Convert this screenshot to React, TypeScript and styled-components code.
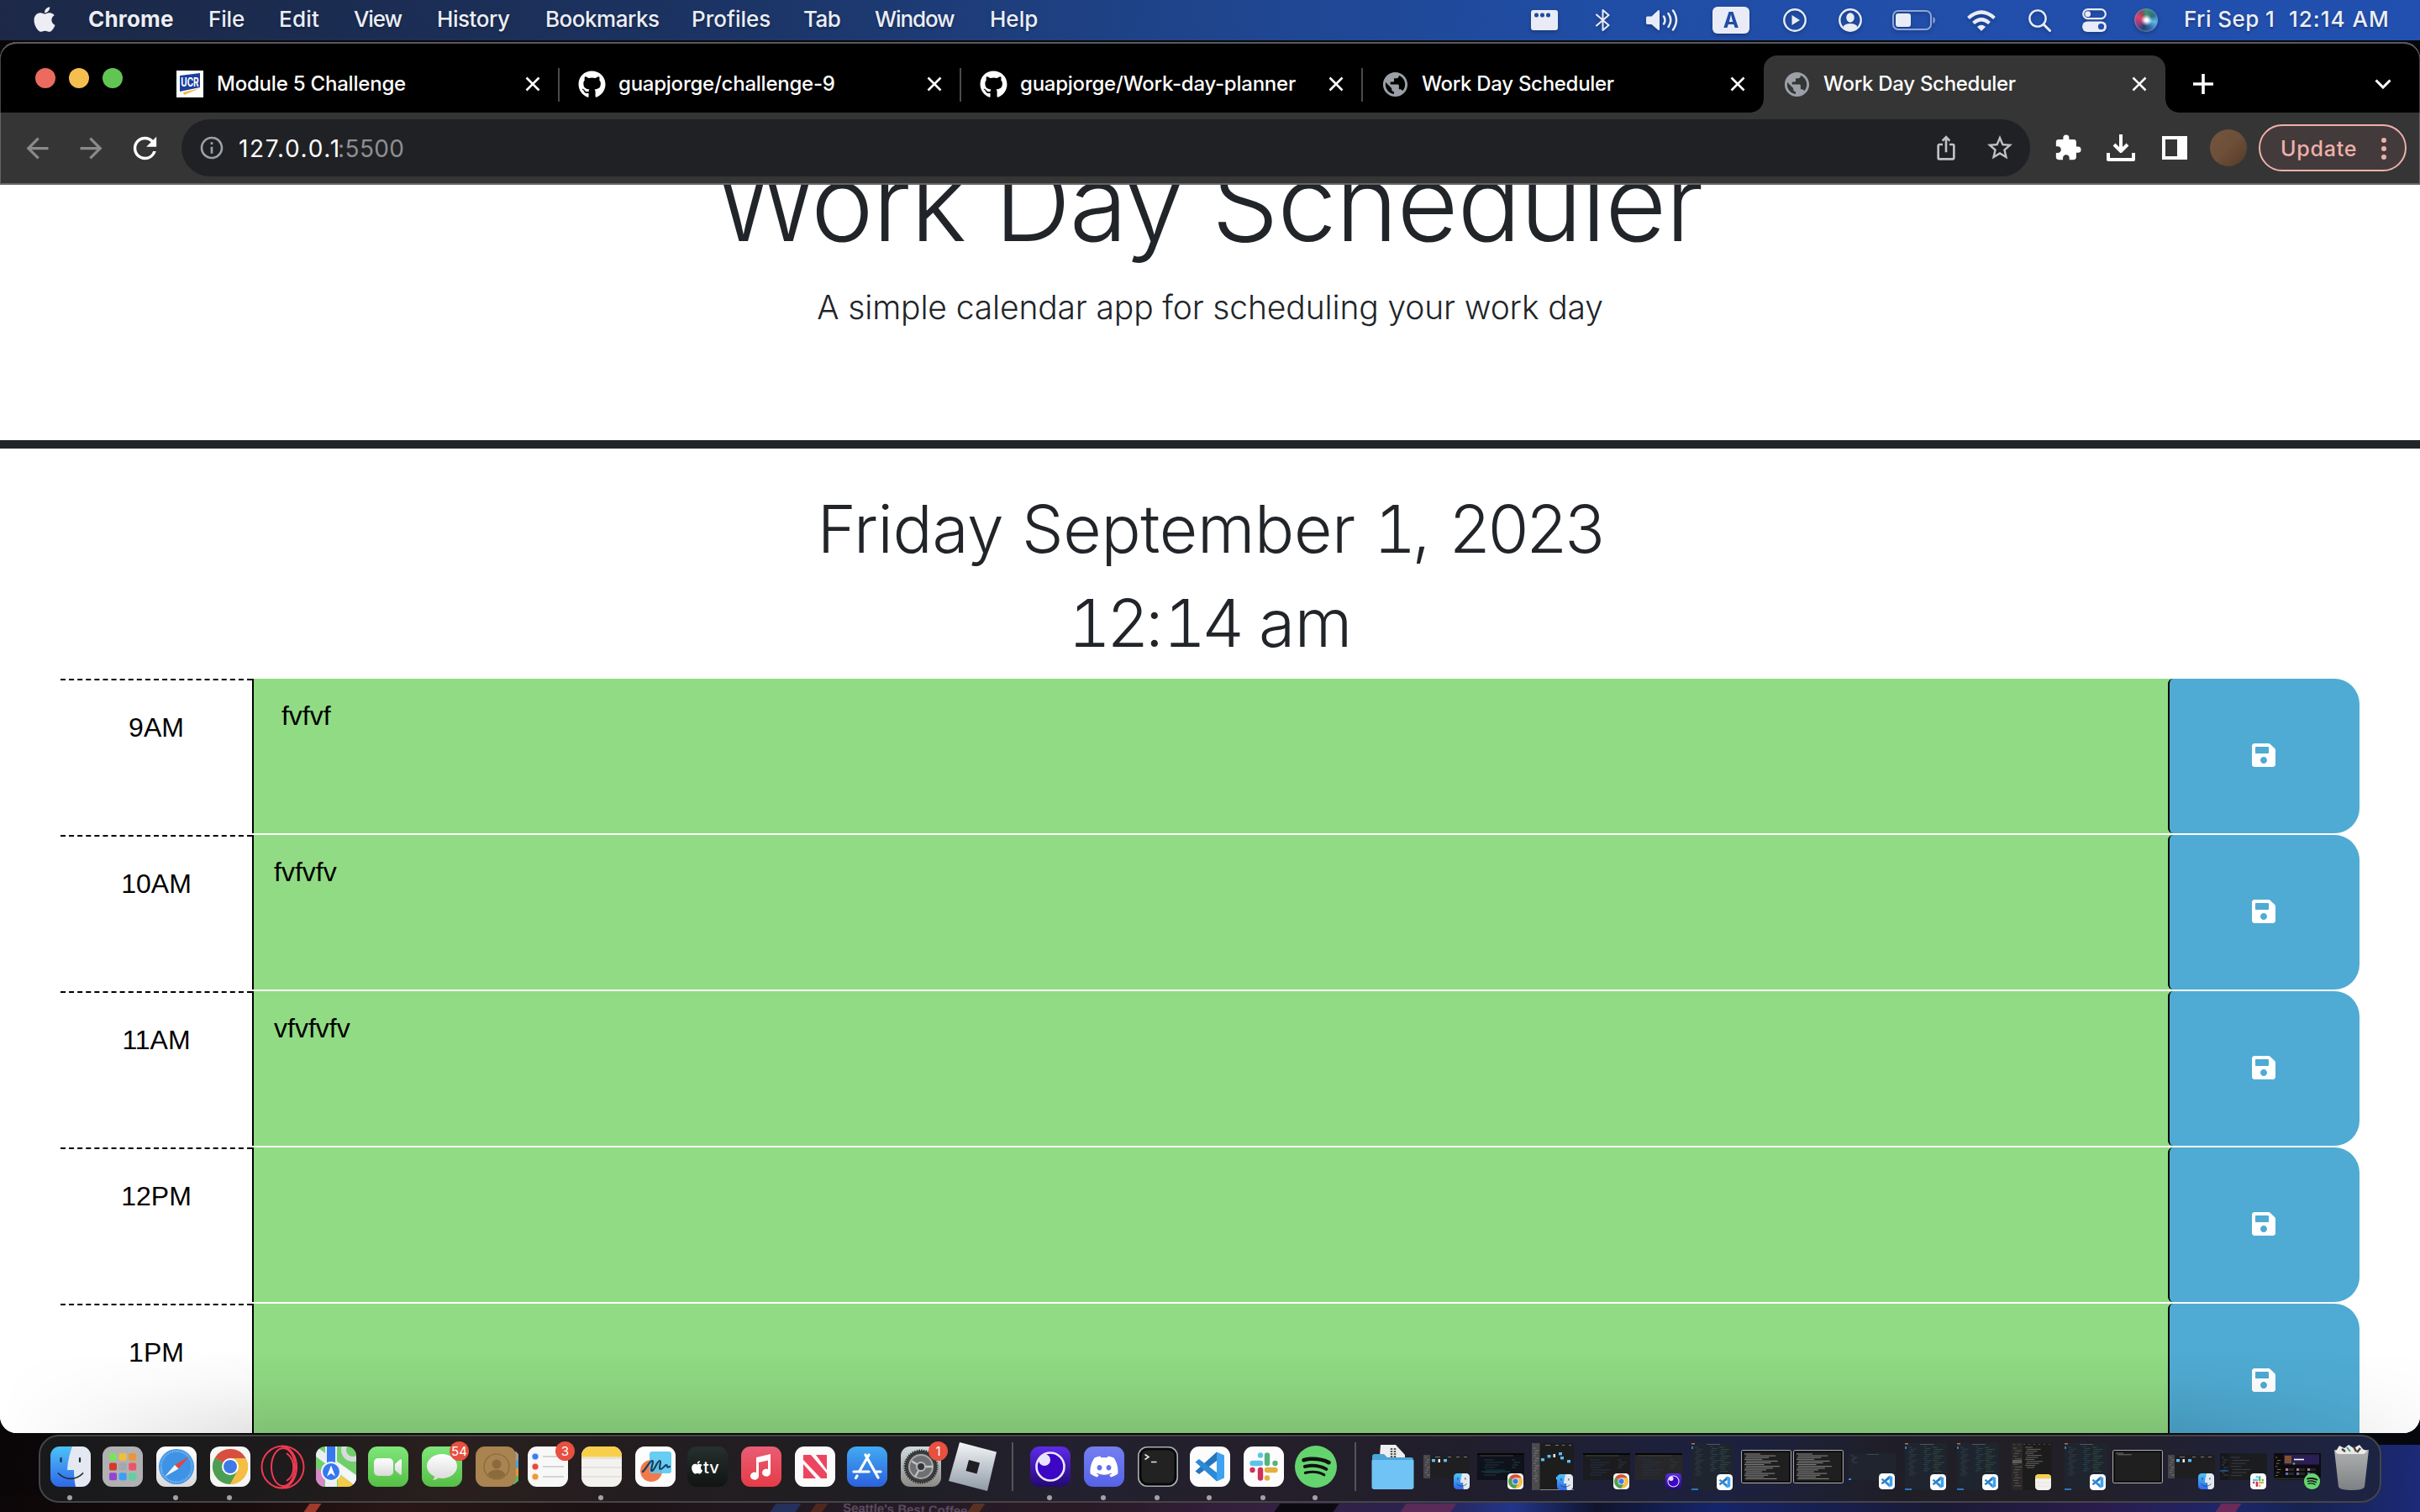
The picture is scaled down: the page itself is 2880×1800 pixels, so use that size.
import React from "react";
import styled, { createGlobalStyle, css } from "styled-components";
import { FaApple, FaGithub, FaDiscord, FaSave, FaSpotify } from "react-icons/fa";
import {
  MdPublic,
  MdIosShare,
  MdStarBorder,
  MdExtension,
  MdArrowBack,
  MdArrowForward,
  MdRefresh,
  MdInfoOutline,
} from "react-icons/md";

const UI = `Inter, "Liberation Sans", sans-serif`;
const HELV = `"Liberation Sans", Arial, sans-serif`;

const Global = createGlobalStyle`
  html, body { margin: 0; padding: 0; background: #000; }
  *, *::before, *::after { box-sizing: border-box; }
  svg { display: block; flex: none; }
`;

/* ---------- desktop ---------- */

const Desktop = styled.div`
  position: relative;
  width: 2880px;
  height: 1800px;
  overflow: hidden;
  display: flex;
  flex-direction: column;
  font-family: ${UI};
  background:
    linear-gradient(90deg, transparent 2640px, #16224f 2740px, #1c2a78 2880px) 0 1720px / 100% 80px no-repeat,
    linear-gradient(90deg, #0c0708 0, #1a0c0d 300px, #2a1616 480px, #1c1214 700px, #241a24 1000px, #2a1a26 1300px,
      #35203f 1500px, #2a2350 1700px, #22358a 1800px, #10142c 1900px, #15256b 2040px, #1a1a34 2300px, #2a1c4c 2500px, #1a2a74 2700px) 0 1780px / 100% 20px no-repeat,
    linear-gradient(90deg, #0a0608 0, #0d0608 100px, #0a0a12 2700px, #06070d 2880px);
`;

const WallpaperStrip = styled.div`
  position: absolute;
  left: 0;
  right: 0;
  bottom: 0;
  height: 10px;
  overflow: hidden;
`;

const Streak = styled.span<{ $x: number; $w: number; $c: string }>`
  position: absolute;
  top: 0;
  height: 10px;
  left: ${(p) => p.$x}px;
  width: ${(p) => p.$w}px;
  background: ${(p) => p.$c};
  transform: skewX(-35deg);
`;

const ShopSign = styled.span`
  position: absolute;
  left: 1003px;
  top: -1px;
  font: 700 15px/15px ${HELV};
  color: #5c4a60;
  white-space: nowrap;
  transform: rotate(1.5deg);
`;

/* ---------- menu bar ---------- */

const MenuBar = styled.header`
  height: 48px;
  flex: none;
  display: flex;
  align-items: center;
  padding: 0 0 3px 37px;
  color: #eceef4;
  background: linear-gradient(90deg, #1c2846 0, #1b2e56 560px, #1c3567 900px, #1f448b 1400px, #204da5 1900px, #2250b0 2880px);
`;

const AppleSlot = styled.div`
  width: 69px;
  margin-left: -1px;
  padding-top: 1px;
`;

const MenuItem = styled.span<{ $w: number; $ls: number; $bold?: boolean; $gap?: number }>`
  width: ${(p) => p.$w}px;
  margin-left: ${(p) => p.$gap ?? 0}px;
  font-size: 26px;
  line-height: 45px;
  font-weight: ${(p) => (p.$bold ? 700 : 500)};
  letter-spacing: ${(p) => p.$ls}px;
  white-space: nowrap;
  text-shadow: 0 2px 3px rgba(0, 0, 0, 0.3);
`;

const Status = styled.div`
  margin-left: auto;
  display: flex;
  align-items: center;
`;

const StatusIcon = styled.span<{ $gap: number }>`
  margin-left: ${(p) => p.$gap}px;
  padding-top: 3px;
  filter: drop-shadow(0 2px 2px rgba(0, 0, 0, 0.25));
`;

const InputSource = styled.span`
  display: flex;
  align-items: center;
  justify-content: center;
  width: 44px;
  height: 32px;
  border-radius: 6px;
  background: #e9ecf6;
  color: #204da5;
  font-size: 25px;
  font-weight: 700;
`;

const Siri = styled.span`
  display: block;
  width: 28px;
  height: 28px;
  border-radius: 50%;
  background:
    radial-gradient(circle at 52% 50%, #ffffff 0 8%, rgba(255, 255, 255, 0.5) 20%, transparent 34%),
    conic-gradient(from 0deg at 50% 50%, #3f8f74, #2d6f80 60deg, #5cb8ee 100deg, #3468a8 150deg, #25406f 200deg, #8a3f80 240deg, #e0406a 290deg, #8d4a5a 330deg, #3f8f74);
  box-shadow: inset 0 0 0 1.5px rgba(110, 150, 190, 0.55);
`;

/* ---------- browser chrome ---------- */

const Window = styled.main`
  position: relative;
  margin-top: 2px;
  height: 1656px;
  flex: none;
  display: flex;
  flex-direction: column;
  overflow: hidden;
  border-radius: 20px;
  background: #fff;
`;

const TabStrip = styled.div`
  height: 84px;
  flex: none;
  display: flex;
  align-items: flex-end;
  background: #000;
  border-radius: 20px 20px 0 0;
  box-shadow: inset 0 2px 0 #585a5b, inset 1px 0 0 #444, inset -1px 0 0 #444;
`;

const Lights = styled.div`
  width: 187px;
  height: 84px;
  padding: 31px 0 0 42px;
  display: flex;
  gap: 16px;
`;

const Light = styled.span<{ $c: string }>`
  width: 24px;
  height: 24px;
  border-radius: 50%;
  background: ${(p) => p.$c};
`;

const Tab = styled.div<{ $active?: boolean; $line?: boolean }>`
  position: relative;
  width: 478px;
  height: 68px;
  padding: 0 22px 0 23px;
  display: flex;
  align-items: center;
  color: #fff;
  ${(p) =>
    p.$line &&
    css`
      &::after {
        content: "";
        position: absolute;
        right: -1px;
        top: 15px;
        width: 2px;
        height: 40px;
        background: #4a4b4c;
      }
    `}
  ${(p) =>
    p.$active &&
    css`
      background: #353535;
      border-radius: 16px 16px 0 0;
      &::before,
      &::after {
        content: "";
        position: absolute;
        bottom: 0;
        width: 16px;
        height: 16px;
      }
      &::before {
        left: -16px;
        background: radial-gradient(circle at 0 0, transparent 15.5px, #353535 16px);
      }
      &::after {
        right: -16px;
        background: radial-gradient(circle at 100% 0, transparent 15.5px, #353535 16px);
      }
    `}
`;

const Favicon = styled.span`
  width: 32px;
  height: 32px;
  display: flex;
  align-items: center;
  justify-content: center;
  color: #9aa0a6;
`;

const TabTitle = styled.span<{ $ls: number }>`
  flex: 1;
  padding: 0 0 1px 16px;
  font-size: 24px;
  line-height: 31px;
  font-weight: 500;
  letter-spacing: ${(p) => p.$ls}px;
  white-space: nowrap;
`;

const StripButton = styled.span<{ $gap?: number; $end?: number }>`
  height: 68px;
  display: flex;
  align-items: center;
  margin-left: ${(p) => (p.$end ? "auto" : `${p.$gap}px`)};
  margin-right: ${(p) => p.$end ?? 0}px;
`;

const Toolbar = styled.div`
  height: 86px;
  flex: none;
  display: flex;
  align-items: center;
  padding: 0 16px 0 24px;
  background: #353535;
  border-bottom: 2px solid #666;
  box-shadow: inset 1px 0 0 #626262, inset -1px 0 0 #626262;
`;

const NavButton = styled.span<{ $on?: boolean }>`
  width: 40px;
  margin-right: 24px;
  display: flex;
  justify-content: center;
  color: ${(p) => (p.$on ? "#fff" : "#8a8a8a")};
`;

const Omnibox = styled.div`
  width: 2200px;
  height: 68px;
  padding: 0 18px 0 20px;
  border-radius: 34px;
  display: flex;
  align-items: center;
  background: #202124;
  color: #9aa0a6;
`;

const Url = styled.span`
  flex: 1;
  margin-left: 16px;
  padding-top: 1px;
  display: flex;
  font-size: 28px;
  line-height: 34px;
`;
const Host = styled.span`
  width: 118px;
  color: #fff;
  letter-spacing: 1.7px;
  white-space: nowrap;
`;
const Port = styled.span`
  color: #8d8f92;
  letter-spacing: 0.4px;
`;

const BoxIcon = styled.span<{ $gap?: number; $c?: string }>`
  margin-left: ${(p) => p.$gap ?? 0}px;
  color: ${(p) => p.$c ?? "#fff"};
`;

const Avatar = styled.span`
  width: 44px;
  height: 44px;
  margin-left: 27px;
  border-radius: 50%;
  background: linear-gradient(135deg, #73553f, #6e4f38 50%, #513a29);
`;

const UpdatePill = styled.span`
  width: 176px;
  height: 56px;
  margin-left: 14px;
  padding: 1px 22px 0 24px;
  border: 2px solid #efb0aa;
  border-radius: 28px;
  background: #433b3b;
  color: #efb0aa;
  display: flex;
  align-items: center;
  justify-content: space-between;
  font-size: 25px;
  font-weight: 500;
  letter-spacing: 0.8px;
`;

/* ---------- planner page ---------- */

const Page = styled.div`
  position: relative;
  flex: 1;
  overflow: hidden;
  background: #fff;
  color: #212529;
  &::after {
    content: "";
    position: absolute;
    left: 0;
    right: 0;
    bottom: 0;
    height: 100px;
    background: linear-gradient(180deg, transparent, rgba(0, 0, 0, 0.03) 40%, rgba(0, 0, 0, 0.115));
    mask-image: linear-gradient(90deg, transparent, #000 320px, #000 2600px, rgba(0, 0, 0, 0.2));
  }
`;

const Jumbotron = styled.header`
  height: 314px;
  border-bottom: 10px solid #212529;
  overflow: hidden;
  text-align: center;
`;

const Title = styled.h1`
  margin: -54px 0 0;
  font-size: 126px;
  line-height: 150px;
  font-weight: 300;
  letter-spacing: -1.2px;
  text-indent: -3px;
  white-space: nowrap;
`;

const Lead = styled.p`
  margin: 20px 0 0;
  font-size: 39px;
  line-height: 60px;
  font-weight: 300;
  letter-spacing: -0.14px;
  white-space: nowrap;
`;

const Now = styled.section`
  padding: 40px 0 10px;
  text-align: center;
`;

const NowLine = styled.p<{ $ls?: number }>`
  margin: 0;
  font-size: 78.5px;
  line-height: 112px;
  font-weight: 300;
  letter-spacing: ${(p) => p.$ls ?? 0}px;
  white-space: nowrap;
`;

const Digits = styled.span`
  font-variant-numeric: tabular-nums;
  letter-spacing: -5px;
`;

const Schedule = styled.div`
  padding: 0 72px;
  font-family: ${HELV};
  font-size: 32px;
  line-height: 48px;
  color: #000;
`;

const TimeBlock = styled.div`
  height: 186px;
  padding-bottom: 2px;
  display: grid;
  grid-template-columns: 228px 2280px 228px;
`;

const Hour = styled.div`
  padding-top: 32px;
  border-top: 2px dashed #000;
  text-align: center;
`;

const Entry = styled.div`
  padding: 20px 24px;
  border-left: 2px solid #000;
  background: #91db84;
  white-space: pre;
`;

const SaveCell = styled.div`
  background: linear-gradient(90deg, #91db84 50%, #fff 50%);
`;

const SaveButton = styled.button`
  width: 100%;
  height: 100%;
  padding: 0 2px 2px 0;
  border: 0;
  border-left: 2px solid #000;
  border-radius: 6px 30px 30px 6px;
  background: #4fabd3;
  color: #fff;
  display: flex;
  align-items: center;
  justify-content: center;
`;

/* ---------- dock ---------- */

const DockBar = styled.footer`
  position: relative;
  width: 2788px;
  height: 81px;
  margin: 2px 0 0 46px;
  padding: 0 12px 5px;
  display: flex;
  align-items: center;
  border: 2px solid #454548;
  border-radius: 24px;
  background: linear-gradient(90deg, #19191b 0, #1d1b1c 280px, #2a1f1e 500px, #231d20 720px, #1f1e23 1000px, #232130 1250px,
    #241f2a 1450px, #211e2c 1700px, #1c2140 2010px, #1f1e28 2200px, #231f26 2400px, #20223a 2640px, #1c2444 2788px);
`;

const DockItem = styled.div<{ $gap: number; $running?: boolean }>`
  position: relative;
  margin-left: ${(p) => p.$gap}px;
  flex: none;
  ${(p) =>
    p.$running &&
    css`
      &::after {
        content: "";
        position: absolute;
        left: calc(50% - 4px);
        top: calc(50% + 34px);
        width: 6px;
        height: 6px;
        border-radius: 50%;
        background: #a2a1a5;
      }
    `}
`;

const Count = styled.span`
  position: absolute;
  left: 33px;
  top: -6px;
  width: 23px;
  height: 23px;
  border-radius: 50%;
  background: #e8503f;
  color: #fff;
  font-size: 15px;
  line-height: 23px;
  text-align: center;
`;

const Divider = styled.span<{ $gap: number }>`
  width: 2px;
  height: 58px;
  margin-left: ${(p) => p.$gap}px;
  background: #56545a;
`;

const Corner = styled.span`
  position: absolute;
  right: 1px;
  bottom: 0;
`;

const Thumb = styled.div<{ $w: number; $h: number; $drop: number }>`
  position: relative;
  width: ${(p) => p.$w}px;
  height: ${(p) => p.$h}px;
  ${Corner} {
    bottom: -${(p) => p.$drop}px;
  }
`;

/* ---------- drawings ---------- */

const Cross = () => (
  <svg width="18" height="18" viewBox="0 0 18 18">
    <path d="M1.5 1.5l15 15M16.5 1.5l-15 15" stroke="#fff" strokeWidth="2.6" />
  </svg>
);

const UcrLogo = () => (
  <svg width="32" height="32" viewBox="0 0 32 32">
    <rect width="32" height="32" fill="#fff" />
    <path d="M4 6l24-3v17L4 25z" fill="#1c3fa0" />
    <path d="M8 26l20-5-19 8z" fill="#f2b53a" />
    <g transform="translate(16 19) scale(.72 1)">
      <text fontSize="14" fontWeight="700" textAnchor="middle" fill="#fff" fontFamily="Inter">
        UCR
      </text>
    </g>
  </svg>
);

const S = ({ s = 48, children }: { s?: number; children: React.ReactNode }) => (
  <svg width={s} height={s} viewBox="0 0 48 48">
    {children}
  </svg>
);

type IconProps = { s?: number };

const Finder = ({ s }: IconProps) => (
  <S s={s}>
    <rect width="48" height="48" rx="11" fill="url(#gFinder)" />
    <path d="M26 0h11a11 11 0 0 1 11 11v26a11 11 0 0 1-11 11h-7c-1.500-7-2-13-2-20h-8C20.500 18 23 8 26 0z" fill="#e4e8f0" />
    <path d="M12.500 14v4M35 14v4" stroke="#1d2b3a" strokeWidth="2.200" strokeLinecap="round" />
    <path d="M9.500 32c8 8.500 21 8.500 29 0" fill="none" stroke="#1d2b3a" strokeWidth="1.800" strokeLinecap="round" />
  </S>
);

const tileColors = ["#7be35a", "#f2bd3c", "#e8963a", "#d33b2c", "#a3a8ac", "#ee5468", "#9344d3", "#3aa0f5", "#62cfa0"];
const Launchpad = () => (
  <S>
    <rect width="48" height="48" rx="11" fill="#b1b1b3" />
    {tileColors.map((c, i) => (
      <rect key={i} x={8 + (i % 3) * 11.6} y={8 + Math.floor(i / 3) * 11.6} width="9" height="9" rx="2" fill={c} />
    ))}
  </S>
);

const Safari = () => (
  <S>
    <rect width="48" height="48" rx="11" fill="url(#gWhite)" />
    <circle cx="24" cy="24" r="21" fill="#3f93e6" />
    <circle cx="24" cy="24" r="18.500" fill="none" stroke="#a9d3f7" strokeWidth="2.400" strokeDasharray="0.600 1.300" />
    <path d="M39 12L26.500 26.500 22 22z" fill="#e2453b" />
    <path d="M10 36l12-14 4.500 4.500z" fill="#f3f5f7" />
  </S>
);

const ChromeLogo = ({ s }: IconProps) => (
  <S s={s}>
    <rect width="48" height="48" rx="11" fill="#f6f6f6" />
    <circle cx="24" cy="24" r="21" fill="#f3be42" />
    <path d="M24 24L5.810 13.500A21 21 0 0 1 42.500 14H24z" fill="#d64f41" />
    <path d="M24 24l9 4.500L24 45A21 21 0 0 1 5.810 13.500z" fill="#4c9e54" />
    <path d="M24 14h18.500A21 21 0 0 1 24 45l8.700-16z" fill="#f3be42" />
    <circle cx="24" cy="24" r="10" fill="#fff" />
    <circle cx="24" cy="24" r="8" fill="#3f79e6" />
  </S>
);

const Opera = () => (
  <svg width="53" height="53" viewBox="0 0 53 53">
    <g fill="none" stroke="#ee3a52" strokeWidth="2">
      <circle cx="26.500" cy="26.500" r="25" />
      <ellipse cx="27" cy="26.500" rx="14" ry="22.500" />
      <path d="M25 1.500c24 3 24 47 0 50" />
      <path d="M31 10c11 8 11 26 0 33" />
    </g>
  </svg>
);

const Maps = () => (
  <S>
    <g clipPath="url(#cApp)">
      <rect width="48" height="48" fill="#6fd06a" />
      <path d="M0 12l48 36V34L0 0z" fill="#eceef0" />
      <path d="M0 26l10 4v18H0z" fill="#d987c6" />
      <path d="M48 48H26V32z" fill="#f6cb45" />
      <circle cx="44" cy="4" r="11" fill="none" stroke="#d8dadd" strokeWidth="6" />
      <path d="M11 0h14v48H11z" fill="#eceef0" />
      <path d="M13 0h10v24H13z" fill="#3578f0" />
      <path d="M26 28l22 20V36L28 20z" fill="#f5f6f7" />
    </g>
    <circle cx="18" cy="30" r="12" fill="#f3f4f6" />
    <circle cx="18" cy="30" r="10" fill="#3578f0" />
    <path d="M18 22.500l5 13-5-3.500-5 3.500z" fill="#fff" />
  </S>
);

const FaceTime = () => (
  <S>
    <rect width="48" height="48" rx="11" fill="url(#gGreen)" />
    <rect x="7" y="14" width="23" height="21" rx="5" fill="url(#gWhite)" />
    <path d="M32 21l6-5.500q2-1 2 1v16q0 2-2 1L32 28z" fill="url(#gWhite)" />
  </S>
);

const Messages = () => (
  <S>
    <rect width="48" height="48" rx="11" fill="url(#gGreen)" />
    <path d="M24 9c10 0 18 6.500 18 14.500S34 38 24 38c-1.500 0-3-.2-4.500-.4C18 39 15.500 40 13 40c1.200-1.200 2-3 2-4.500C9.500 33 6 28.500 6 23.500 6 15.500 14 9 24 9z" fill="url(#gWhite)" />
  </S>
);

const Contacts = () => (
  <svg width="51" height="48" viewBox="0 0 51 48">
    <path d="M40 6h8l3 3v8H40z" fill="#9b9b9b" />
    <path d="M40 17h11v9H40z" fill="#4aa3dc" />
    <path d="M40 26h11v9H40z" fill="#ef9234" />
    <path d="M40 35h11v6l-5 4h-6z" fill="#57b85c" />
    <rect width="48" height="48" rx="11" fill="#a98450" />
    <circle cx="25" cy="24" r="15" fill="none" stroke="#86673b" strokeWidth="1.200" />
    <circle cx="25" cy="21" r="5.500" fill="#8b6b3e" />
    <path d="M14.500 33c4-7 17-7 21 0-5 7-16 7-21 0z" fill="#8b6b3e" />
  </svg>
);

const Reminders = () => (
  <S>
    <rect width="48" height="48" rx="11" fill="#f8f8f8" />
    {["#3c7cf0", "#e8473c", "#ec9a36"].map((c, i) => (
      <g key={c}>
        <circle cx="9" cy={12 + i * 12} r="3.300" fill={c} stroke={c} strokeOpacity=".35" strokeWidth="1.800" />
        <path d={`M18 ${12 + i * 12}h25`} stroke="#c9c9c9" strokeWidth="1.500" />
      </g>
    ))}
  </S>
);

const Notes = ({ s }: IconProps) => (
  <S s={s}>
    <g clipPath="url(#cApp)">
      <rect width="48" height="48" fill="#f3f2ee" />
      <rect width="48" height="12.500" fill="#f8cf4b" />
      <path d="M0 14h48" stroke="#b9b6ac" strokeDasharray="1 1" />
      <path d="M0 25h48M0 36h48" stroke="#d4d3cf" />
    </g>
  </S>
);

const Freeform = () => (
  <S>
    <rect width="48" height="48" rx="11" fill="#fdfdfd" />
    <circle cx="19" cy="29" r="13" fill="#f07a4c" />
    <rect x="17" y="6" width="26" height="26" rx="3" fill="#56c8f2" fillOpacity=".9" />
    <path d="M9 30c4-3 8-13 11-13s-3 12 0 12 6-12 9-12-2 10 1 10 5-5 7-5-1 4 4 2" fill="none" stroke="#173c5f" strokeWidth="2.200" strokeLinecap="round" />
  </S>
);

const AppleTv = () => (
  <S>
    <rect width="48" height="48" rx="11" fill="url(#gTv)" />
    <g transform="translate(5 16) scale(.0345)" fill="#fff">
      <path d="M318.700 268.700c-.2-36.700 16.400-64.400 50-84.800-18.800-26.900-47.200-41.700-84.700-44.600-35.500-2.800-74.300 20.700-88.500 20.700-15 0-49.400-19.700-76.400-19.700C63.300 141.200 4 184.800 4 273.500q0 39.300 14.400 81.200c12.800 36.700 59 126.700 107.200 125.200 25.200-.6 43-17.900 75.800-17.900 31.800 0 48.300 17.900 76.400 17.900 48.600-.7 90.400-82.500 102.600-119.300-65.200-30.700-61.700-90-61.700-91.900zM262.100 104.500c27.300-32.400 24.800-61.900 24-72.500-24.100 1.400-52 16.400-67.900 34.900-17.500 19.800-27.800 44.300-25.600 71.900 26.100 2 49.900-11.400 69.500-34.300z" />
    </g>
    <text x="19" y="32" fontSize="20" fontWeight="500" fill="#fff" fontFamily="Inter">tv</text>
  </S>
);

const Music = () => (
  <S>
    <rect width="48" height="48" rx="11" fill="url(#gMusic)" />
    <path d="M18 13l17-4v22a5 4.500 0 1 1-3-4V16.500l-11 2.600V35a5 4.500 0 1 1-3-4z" fill="#fff" />
  </S>
);

const News = () => (
  <S>
    <rect width="48" height="48" rx="11" fill="#fbfbfb" />
    <rect x="10" y="10" width="28" height="28" fill="#ec4560" />
    <path d="M21 10h-2l19 22v-4L25 10z" fill="#fbfbfb" />
    <path d="M10 16v5l15 17h6z" fill="#fbfbfb" />
  </S>
);

const AppStore = () => (
  <S>
    <rect width="48" height="48" rx="11" fill="url(#gBlue)" />
    <g stroke="#fff" strokeWidth="3.200" strokeLinecap="round">
      <path d="M26 10L14.500 30M22 10l15 27M8 30h18M33 30h7M12 35l-1.500 2.500" />
    </g>
  </S>
);

const Settings = () => (
  <S>
    <rect width="48" height="48" rx="11" fill="url(#gGray)" />
    <circle cx="24" cy="24" r="19" fill="#3c3d3f" stroke="#2a2b2c" strokeWidth="3" strokeDasharray="1.500 1.200" />
    <circle cx="24" cy="24" r="14" fill="#6e7073" stroke="#a7a9ab" strokeWidth="2" />
    <path d="M24 24L13 17.500M24 24h14M24 24l-7 12" stroke="#c2c4c5" strokeWidth="2.400" />
    <circle cx="24" cy="24" r="5" fill="#333" stroke="#b4b6b8" strokeWidth="2" />
  </S>
);

const Roblox = () => (
  <svg width="58" height="58" viewBox="0 0 58 58">
    <path d="M13 0l44 11.500L46 58 0 46z" fill="url(#gRoblox)" />
    <path d="M24 21l13 3.500-3.500 13L20.500 34z" fill="#1f1e23" />
  </svg>
);

const Orb = ({ s }: IconProps) => (
  <S s={s}>
    <rect width="48" height="48" rx="11" fill="url(#gOrb)" />
    <circle cx="24" cy="24" r="16.500" fill="#3d06c4" stroke="#ece8ff" strokeWidth="2.600" />
    <circle cx="17" cy="16" r="7" fill="#e9e4fb" />
  </S>
);

const TileBase = styled.span<{ $bg: string }>`
  width: 48px;
  height: 48px;
  border-radius: 11px;
  background: ${(p) => p.$bg};
  color: #fff;
  display: flex;
  align-items: center;
  justify-content: center;
`;

const Discord = () => (
  <TileBase $bg="linear-gradient(#747fee, #5663e8)">
    <FaDiscord size={36} />
  </TileBase>
);

const Terminal = () => (
  <S>
    <rect x=".8" y=".8" width="46.400" height="46.400" rx="10.500" fill="#070707" stroke="#a9b0b3" strokeWidth="1.600" />
    <rect x="4.500" y="4.500" width="39" height="39" rx="7" fill="#222" />
    <path d="M8.500 9.500l4.500 3-4.500 3M16 18.500h6.500" fill="none" stroke="#e6e6e6" strokeWidth="1.600" />
  </S>
);

const VsCode = ({ s }: IconProps) => (
  <S s={s}>
    <rect width="48" height="48" rx="11" fill="#fcfcfc" />
    <path d="M6.500 29.500L32 6.500v10.500L11 33z" fill="#2676bd" />
    <path d="M6.500 18.500L11 15l21 16v10.500z" fill="#2b8ad6" />
    <path d="M32 6.500l9 4v27l-9 4z" fill="#3ea2f0" />
  </S>
);

const Slack = ({ s }: IconProps) => (
  <S s={s}>
    <rect width="48" height="48" rx="11" fill="#fcfcfc" />
    <g strokeWidth="6.400" strokeLinecap="round">
      <path d="M20 10.500v.01" stroke="#5cc4ec" />
      <path d="M10.500 20h9.500" stroke="#5cc4ec" />
      <path d="M28 10.500V20" stroke="#55b37f" />
      <path d="M37.500 20v.01" stroke="#55b37f" />
      <path d="M28 28h9.500" stroke="#e2b041" />
      <path d="M28 37.500v.01" stroke="#e2b041" />
      <path d="M20 28v9.500" stroke="#cf3058" />
      <path d="M10.500 28v.01" stroke="#cf3058" />
    </g>
  </S>
);

const SpotifyDisc = styled.span<{ $s: number }>`
  display: block;
  width: ${(p) => p.$s}px;
  height: ${(p) => p.$s}px;
  border-radius: 50%;
  background: radial-gradient(#111 60%, #65d46e 62%);
  color: #65d46e;
`;
const Spotify = ({ s = 50 }: IconProps) => (
  <SpotifyDisc $s={s}>
    <FaSpotify size={s} />
  </SpotifyDisc>
);

const Folder = () => (
  <svg width="51" height="53" viewBox="0 0 51 53">
    <path d="M11 0h18l11 12v14H9z" fill="#eee" />
    <path d="M24 4v14M28 4v14" stroke="#555" strokeWidth="2.500" strokeDasharray="2 1" />
    <path d="M1 14q0-3 3-3h11l4 4h28q3 0 3 3v8H1z" fill="#4ba4d6" />
    <path d="M.5 19q0-1 1-1h48q1 0 1 1v31q0 3-3 3h-44q-3 0-3-3z" fill="#70c3f5" />
  </svg>
);

const Trash = () => (
  <svg width="43" height="55" viewBox="0 0 43 55">
    <path d="M1 7h41l-5 44q-1 4-15.500 4T6 51z" fill="url(#gTrash)" />
    <path d="M2 10l5-8 6 3 5-4 6 4 7-4 4 5 5 3-4 3H6z" fill="#eceae8" />
    <path d="M10 6l4 3M24 3l3 6M32 5l-4 5" stroke="#4a4038" strokeWidth="2.400" />
    <path d="M16 4l4 5" stroke="#38a08c" strokeWidth="2" />
  </svg>
);

const GradientDefs = styled.svg`
  position: absolute;
`;

const Gradients = () => (
  <GradientDefs width="0" height="0">
    <defs>
      {(
        [
          ["gFinder", "#4cc3f8", "#2f66ea"],
          ["gWhite", "#ffffff", "#dadada"],
          ["gGreen", "#7fe67a", "#55bf45"],
          ["gTv", "#26302e", "#101413"],
          ["gMusic", "#ea5d74", "#e63b46"],
          ["gBlue", "#42aaf2", "#2b62de"],
          ["gGray", "#cfdadd", "#8b8984"],
          ["gRoblox", "#f4f6f8", "#8f9aa6"],
          ["gOrb", "#5d2be8", "#250873"],
          ["gTrash", "#aeb0b1", "#7e8183"],
        ] as const
      ).map(([id, a, b]) => (
        <linearGradient key={id} id={id} x1="0" y1="0" x2="0" y2="1">
          <stop offset="0" stopColor={a} />
          <stop offset="1" stopColor={b} />
        </linearGradient>
      ))}
      <clipPath id="cApp">
        <rect width="48" height="48" rx="11" />
      </clipPath>
    </defs>
  </GradientDefs>
);

/* miniature window contents */

const textRows = (n: number, x: number, y: number, step: number, c: string, max: number) =>
  Array.from({ length: n }, (_, i) => (
    <path key={`${x}-${i}`} d={`M${x + ((i * 5) % 3)} ${y + i * step}h${max * (0.45 + ((i * 37) % 10) / 18)}`} stroke={c} strokeWidth="1" />
  ));

const MiniFinder = ({ tall }: { tall?: boolean }) =>
  tall ? (
    <svg width="50" height="56" viewBox="0 0 50 56">
      <rect width="50" height="56" fill="#1d1d1e" />
      <rect width="9.500" height="56" fill="#4b4b4e" />
      {textRows(14, 2, 6, 3, "#7d7d82", 5)}
      <path d="M16 2.500h6M28 2.500h4M36 2.500h3M44 2.500h3" stroke="#77777c" />
      {[[11, 18], [18.500, 14], [32, 11], [34, 16], [42, 20], [29, 40]].map(([x, y]) => (
        <rect key={x} x={x} y={y} width="4" height="3.400" fill="#5fbcf3" />
      ))}
      <rect x="25.500" y="13" width="2.500" height="4" fill="#eee" />
      <path d="M10 55.500h40" stroke="#8a8a8c" />
    </svg>
  ) : (
    <svg width="56" height="28" viewBox="0 0 56 28">
      <rect width="56" height="28" fill="#1f1f21" />
      <rect width="8" height="28" fill="#46464a" />
      {textRows(8, 2, 3, 3, "#77777c", 4)}
      <path d="M14 2.500h6M29 2.500h4M39 2.500h4M48 2.500h4" stroke="#77777c" />
      <rect x="10" y="5" width="4" height="3.400" fill="#5fbcf3" />
      <rect x="17.500" y="5" width="2.500" height="4" fill="#eee" />
      <rect x="24" y="5" width="4" height="3.400" fill="#5fbcf3" />
    </svg>
  );

const MiniBrowser = ({ tint = "#0d121b" }: { tint?: string }) => (
  <svg width="56" height="32" viewBox="0 0 56 32">
    <rect width="56" height="32" fill={tint} />
    <path d="M0 1h56" stroke="#050505" strokeWidth="2" />
    <path d="M3 3h40" stroke="#3c4234" />
    {textRows(7, 8, 8, 3, "#263244", 26)}
    {textRows(4, 41, 8, 3, "#2c3a40", 10)}
    {tint === "#0d121b" && <path d="M5 22h34" stroke="#14514e" />}
  </svg>
);

const MiniCode = ({ wide }: { wide?: boolean }) =>
  wide ? (
    <svg width="56" height="32" viewBox="0 0 56 32">
      <rect width="56" height="32" fill="#20242e" />
      {textRows(5, 3, 3, 2, "#374252", 6)}
      <path d="M22 1.500h14" stroke="#3d4654" />
      <rect y="30" width="3" height="2" fill="#2d8ae0" />
    </svg>
  ) : (
    <svg width="50" height="56" viewBox="0 0 50 56">
      <rect width="50" height="56" fill="#1f252e" />
      <path d="M18 1.500h16" stroke="#4c5665" />
      {textRows(16, 4, 5, 2.2, "#303b48", 9)}
      {textRows(13, 22, 4, 2.4, "#29454e", 8)}
      {textRows(12, 33, 5, 2.6, "#324a42", 12)}
      <rect y="0" width="4" height="1.500" fill="#b8734a" />
      <rect y="4" width="2" height="3" fill="#2d7fc4" />
      <path d="M0 55h8" stroke="#2f8de0" strokeWidth="1.600" />
    </svg>
  );

const MiniTerminal = ({ full }: { full?: boolean }) => (
  <svg width="60" height="40" viewBox="0 0 60 40">
    <rect x=".8" y=".8" width="58.400" height="38.400" rx="2" fill="#1f1f1f" stroke="#a8a9ab" strokeWidth="1.500" />
    <rect x="2" y="2" width="56" height="36" fill="none" stroke="#050505" strokeWidth="1.500" />
    {full ? textRows(15, 4, 5, 2.1, "#8b8b8b", 42) : textRows(2, 4, 4, 1.8, "#707070", 20)}
  </svg>
);

const MiniNotes = () => (
  <svg width="48" height="56" viewBox="0 0 48 56">
    <rect width="48" height="56" fill="#1d1c1c" />
    <rect width="13" height="56" fill="#2b2828" />
    <path d="M2 1.500h44" stroke="#594a22" strokeDasharray="2 4" />
    {textRows(15, 2, 6, 3.2, "#5a5656", 9)}
    <rect x="1" y="20" width="11" height="4" fill="#605c5c" />
    {textRows(11, 16, 5, 2.4, "#666261", 20)}
  </svg>
);

const MiniSlack = () => (
  <svg width="56" height="32" viewBox="0 0 56 32">
    <rect width="56" height="32" fill="#1b1c1f" />
    <rect width="10" height="32" fill="#15171b" />
    {textRows(8, 2, 5, 3, "#40434a", 6)}
    {textRows(7, 13, 5, 3.600, "#3d3e42", 24)}
    <path d="M0 21h10" stroke="#1d5fae" strokeWidth="1.400" />
  </svg>
);

const MiniSpotify = () => (
  <svg width="56" height="32" viewBox="0 0 56 32">
    <rect width="56" height="32" fill="#0c0c0e" />
    <rect x="12" y="1.500" width="42" height="12" fill="#2b1d55" />
    <rect x="13" y="3" width="8" height="9" fill="#80502f" />
    <path d="M24 7.500h12" stroke="#fff" strokeWidth="1.600" />
    <circle cx="24" cy="12.500" r="1.300" fill="#4cc15d" />
    {[14, 27, 40].map((x) => (
      <g key={x}>
        <rect x={x} y="18" width="10" height="3" fill="#25252a" />
        <rect x={x} y="23" width="10" height="3" fill="#25252a" />
        <rect x={x} y="18" width="3" height="3" fill="#b07fa0" />
        <rect x={x} y="23" width="3" height="3" fill="#5d6fae" />
      </g>
    ))}
    {textRows(7, 2, 5, 3.600, "#8a6a5a", 5)}
    <path d="M0 30.500h56" stroke="#333" strokeWidth="1.500" />
  </svg>
);

/* ---------- data ---------- */

const menus: { label: string; w: number; ls: number; bold?: boolean }[] = [
  { label: "Chrome", w: 143, ls: 0.19, bold: true },
  { label: "File", w: 84, ls: -0.14 },
  { label: "Edit", w: 89, ls: 0.23 },
  { label: "View", w: 99, ls: -1.1 },
  { label: "History", w: 129, ls: -0.45 },
  { label: "Bookmarks", w: 174, ls: -0.48 },
  { label: "Profiles", w: 133, ls: 0 },
  { label: "Tab", w: 85, ls: -0.6 },
  { label: "Window", w: 137, ls: -1.1 },
  { label: "Help", w: 80, ls: 0 },
];

const tabs = [
  { title: "Module 5 Challenge", icon: <UcrLogo />, ls: -0.21, line: true },
  { title: "guapjorge/challenge-9", icon: <FaGithub size={33} color="#fff" />, ls: -0.24, line: true },
  { title: "guapjorge/Work-day-planner", icon: <FaGithub size={33} color="#fff" />, ls: -0.24, line: true },
  { title: "Work Day Scheduler", icon: <MdPublic size={35} />, ls: -0.3 },
  { title: "Work Day Scheduler", icon: <MdPublic size={35} />, ls: -0.3, active: true },
];

const hours = [
  { hour: "9AM", text: " fvfvf" },
  { hour: "10AM", text: "fvfvfv" },
  { hour: "11AM", text: "vfvfvfv" },
  { hour: "12PM", text: "" },
  { hour: "1PM", text: "" },
];

const apps: { el: React.ReactNode; gap: number; running?: boolean; count?: string }[] = [
  { el: <Finder />, gap: 0, running: true },
  { el: <Launchpad />, gap: 14 },
  { el: <Safari />, gap: 16, running: true },
  { el: <ChromeLogo />, gap: 16, running: true },
  { el: <Opera />, gap: 12 },
  { el: <Maps />, gap: 13 },
  { el: <FaceTime />, gap: 14 },
  { el: <Messages />, gap: 16, count: "54" },
  { el: <Contacts />, gap: 16 },
  { el: <Reminders />, gap: 11, count: "3" },
  { el: <Notes />, gap: 16, running: true },
  { el: <Freeform />, gap: 16 },
  { el: <AppleTv />, gap: 14 },
  { el: <Music />, gap: 16 },
  { el: <News />, gap: 16 },
  { el: <AppStore />, gap: 14 },
  { el: <Settings />, gap: 16, count: "1" },
  { el: <Roblox />, gap: 9 },
];

const recents: { el: React.ReactNode; gap: number }[] = [
  { el: <Orb />, gap: 20 },
  { el: <Discord />, gap: 16 },
  { el: <Terminal />, gap: 16 },
  { el: <VsCode />, gap: 14 },
  { el: <Slack />, gap: 16 },
  { el: <Spotify />, gap: 13 },
];

const windows: { el: React.ReactNode; w: number; h: number; gap: number; drop?: number; corner?: React.ReactNode }[] = [
  { el: <MiniFinder />, w: 56, h: 28, gap: 11, drop: 13, corner: <Finder s={19} /> },
  { el: <MiniBrowser />, w: 56, h: 32, gap: 8, drop: 11, corner: <ChromeLogo s={19} /> },
  { el: <MiniFinder tall />, w: 50, h: 56, gap: 9, drop: -1, corner: <Finder s={19} /> },
  { el: <MiniBrowser tint="#1b1b20" />, w: 56, h: 32, gap: 11, drop: 11, corner: <ChromeLogo s={19} /> },
  { el: <MiniBrowser tint="#272729" />, w: 56, h: 32, gap: 6, drop: 11, corner: <Orb s={19} /> },
  { el: <MiniCode />, w: 50, h: 56, gap: 11, drop: -1, corner: <VsCode s={19} /> },
  { el: <MiniTerminal full />, w: 60, h: 40, gap: 9 },
  { el: <MiniTerminal full />, w: 60, h: 40, gap: 2 },
  { el: <MiniCode wide />, w: 56, h: 32, gap: 6, drop: 11, corner: <VsCode s={19} /> },
  { el: <MiniCode />, w: 50, h: 56, gap: 11, drop: -1, corner: <VsCode s={19} /> },
  { el: <MiniCode />, w: 50, h: 56, gap: 12, drop: -1, corner: <VsCode s={19} /> },
  { el: <MiniNotes />, w: 48, h: 56, gap: 15, drop: -1, corner: <Notes s={19} /> },
  { el: <MiniCode />, w: 50, h: 56, gap: 15, drop: -1, corner: <VsCode s={19} /> },
  { el: <MiniTerminal />, w: 60, h: 40, gap: 7 },
  { el: <MiniFinder />, w: 56, h: 28, gap: 6, drop: 13, corner: <Finder s={19} /> },
  { el: <MiniSlack />, w: 56, h: 32, gap: 6, drop: 11, corner: <Slack s={19} /> },
  { el: <MiniSpotify />, w: 56, h: 32, gap: 8, drop: 11, corner: <Spotify s={19} /> },
];

const W = "#e9ecf6";

const StatusIcons = () => (
  <>
    <StatusIcon $gap={0}>
      <svg width="32" height="24" viewBox="0 0 32 24">
        <rect width="32" height="24" rx="3" fill={W} />
        <g fill="#204a9c">
          <rect x="4" y="3.500" width="5" height="5" rx="2" />
          <rect x="11" y="3.500" width="5" height="5" rx="2" />
          <rect x="18" y="3.500" width="5" height="5" rx="2" />
        </g>
      </svg>
    </StatusIcon>
    <StatusIcon $gap={45}>
      <svg width="17" height="28" viewBox="0 0 17 28">
        <path d="M1 7.500l14.500 12.500-7 6V2l7 6L1 20.500" fill="none" stroke={W} strokeWidth="2" strokeLinejoin="round" strokeLinecap="round" />
      </svg>
    </StatusIcon>
    <StatusIcon $gap={43}>
      <svg width="39" height="28" viewBox="0 0 39 28">
        <path d="M0 11q0-1.500 1.500-1.500h5L14 2.500q2-1.500 2 1v21q0 2.500-2 1L6.500 19h-5Q0 19 0 17z" fill={W} />
        <path d="M21 9.500q3 4.500 0 9M26.500 6q5.500 8 0 16M32 2.500q8 11.500 0 23" fill="none" stroke={W} strokeWidth="2.500" strokeLinecap="round" />
      </svg>
    </StatusIcon>
    <StatusIcon $gap={40}>
      <InputSource>A</InputSource>
    </StatusIcon>
    <StatusIcon $gap={40}>
      <svg width="28" height="28" viewBox="0 0 28 28">
        <circle cx="14" cy="14" r="12.700" fill="none" stroke={W} strokeWidth="2.400" />
        <path d="M10.500 8v12l9.500-6z" fill={W} />
      </svg>
    </StatusIcon>
    <StatusIcon $gap={38}>
      <svg width="28" height="28" viewBox="0 0 28 28">
        <circle cx="14" cy="14" r="12.700" fill="none" stroke={W} strokeWidth="2.400" />
        <ellipse cx="14" cy="11" rx="4.800" ry="5.800" fill={W} />
        <path d="M5.500 22q2-4 8.500-4t8.500 4q-3.500 4.500-8.500 4.500T5.500 22z" fill={W} />
      </svg>
    </StatusIcon>
    <StatusIcon $gap={36}>
      <svg width="51" height="24" viewBox="0 0 51 24">
        <rect x="1" y="1" width="45" height="22" rx="6" fill="none" stroke="#8fa6d8" strokeWidth="2" />
        <rect x="4" y="4" width="18" height="16" rx="3" fill={W} />
        <path d="M48.500 8q2.500 1 2.500 4t-2.500 4z" fill="#8fa6d8" />
      </svg>
    </StatusIcon>
    <StatusIcon $gap={38}>
      <svg width="34" height="25" viewBox="0 0 34 25">
        <g fill="none" stroke={W} strokeWidth="4.200">
          <path d="M1.500 9.500q15.500-14 31 0" />
          <path d="M7.500 15.500q9.500-8.500 19 0" />
        </g>
        <path d="M12 20q5-4.500 10 0l-5 5z" fill={W} />
      </svg>
    </StatusIcon>
    <StatusIcon $gap={39}>
      <svg width="27" height="27" viewBox="0 0 27 27">
        <circle cx="11" cy="11" r="9.600" fill="none" stroke={W} strokeWidth="2.400" />
        <path d="M18 18l7.500 7.500" stroke={W} strokeWidth="3" strokeLinecap="round" />
      </svg>
    </StatusIcon>
    <StatusIcon $gap={37}>
      <svg width="29" height="28" viewBox="0 0 29 28">
        <rect x="1.200" y="1.200" width="26.600" height="11" rx="5.500" fill="none" stroke={W} strokeWidth="2.200" />
        <circle cx="6.700" cy="6.700" r="3.400" fill={W} />
        <rect y="15.500" width="29" height="12.500" rx="6.200" fill={W} />
        <circle cx="22.500" cy="21.700" r="3.600" fill="#2250b0" />
      </svg>
    </StatusIcon>
    <StatusIcon $gap={33}>
      <Siri />
    </StatusIcon>
  </>
);

const BrowserTools = () => (
  <>
    <BoxIcon $gap={28}>
      <MdExtension size={34} />
    </BoxIcon>
    <BoxIcon $gap={29}>
      <svg width="34" height="32" viewBox="0 0 34 32">
        <path d="M17 0v19M9 12l8 8 8-8M2 22v8h30v-8" fill="none" stroke="#fff" strokeWidth="4" strokeLinejoin="round" />
      </svg>
    </BoxIcon>
    <BoxIcon $gap={32}>
      <svg width="30" height="28" viewBox="0 0 30 28">
        <path d="M0 0h30v28H0zM4 4v20h14V4z" fill="#fff" fillRule="evenodd" />
      </svg>
    </BoxIcon>
    <Avatar />
    <UpdatePill>
      Update
      <svg width="6" height="28" viewBox="0 0 6 28" fill="#efb0aa">
        <circle cx="3" cy="4" r="3" />
        <circle cx="3" cy="14" r="3" />
        <circle cx="3" cy="24" r="3" />
      </svg>
    </UpdatePill>
  </>
);

export default function App() {
  return (
    <Desktop>
      <Global />
      <Gradients />
      <MenuBar>
        <AppleSlot>
          <FaApple size={34} />
        </AppleSlot>
        {menus.map((m) => (
          <MenuItem key={m.label} $w={m.w} $ls={m.ls} $bold={m.bold}>
            {m.label}
          </MenuItem>
        ))}
        <Status>
          <StatusIcons />
          <MenuItem $w={125} $ls={0.43} $gap={31}>
            Fri Sep 1
          </MenuItem>
          <MenuItem $w={156} $ls={1}>
            12:14 AM
          </MenuItem>
        </Status>
      </MenuBar>

      <Window>
        <TabStrip>
          <Lights>
            <Light $c="#ed6a5e" />
            <Light $c="#f5bf4f" />
            <Light $c="#61c554" />
          </Lights>
          {tabs.map((t, i) => (
            <Tab key={i} $active={t.active} $line={t.line}>
              <Favicon>{t.icon}</Favicon>
              <TabTitle $ls={t.ls}>{t.title}</TabTitle>
              <Cross />
            </Tab>
          ))}
          <StripButton $gap={33}>
            <svg width="24" height="24" viewBox="0 0 24 24">
              <path d="M12 0v24M0 12h24" stroke="#fff" strokeWidth="3.600" />
            </svg>
          </StripButton>
          <StripButton $end={34}>
            <svg width="20" height="12" viewBox="0 0 20 12">
              <path d="M1.500 1.500L10 10l8.500-8.500" fill="none" stroke="#fff" strokeWidth="3" />
            </svg>
          </StripButton>
        </TabStrip>

        <Toolbar>
          <NavButton>
            <MdArrowBack size={39} />
          </NavButton>
          <NavButton>
            <MdArrowForward size={39} />
          </NavButton>
          <NavButton $on>
            <MdRefresh size={41} />
          </NavButton>
          <Omnibox>
            <MdInfoOutline size={32} />
            <Url>
              <Host>127.0.0.1</Host>
              <Port>:5500</Port>
            </Url>
            <BoxIcon $c="#c0c1c3">
              <MdIosShare size={32} />
            </BoxIcon>
            <BoxIcon $gap={30} $c="#c0c1c3">
              <MdStarBorder size={36} />
            </BoxIcon>
          </Omnibox>
          <BrowserTools />
        </Toolbar>

        <Page>
          <Jumbotron>
            <Title>Work Day Scheduler</Title>
            <Lead>A simple calendar app for scheduling your work day</Lead>
          </Jumbotron>
          <Now>
            <NowLine $ls={-0.35}>
              Friday September <Digits>1</Digits>, <Digits>2023</Digits>
            </NowLine>
            <NowLine $ls={-0.35}>
              <Digits>12</Digits>:<Digits>14</Digits> am
            </NowLine>
          </Now>
          <Schedule>
            {hours.map((h) => (
              <TimeBlock key={h.hour}>
                <Hour>{h.hour}</Hour>
                <Entry>{h.text}</Entry>
                <SaveCell>
                  <SaveButton aria-label="save">
                    <FaSave size={32} />
                  </SaveButton>
                </SaveCell>
              </TimeBlock>
            ))}
          </Schedule>
        </Page>
      </Window>

      <DockBar>
        {apps.map((a, i) => (
          <DockItem key={i} $gap={a.gap} $running={a.running}>
            {a.el}
            {a.count && <Count>{a.count}</Count>}
          </DockItem>
        ))}
        <Divider $gap={17} />
        {recents.map((a, i) => (
          <DockItem key={i} $gap={a.gap} $running>
            {a.el}
          </DockItem>
        ))}
        <Divider $gap={21} />
        <DockItem $gap={18}>
          <Folder />
        </DockItem>
        {windows.map((w, i) => (
          <DockItem key={i} $gap={w.gap}>
            <Thumb $w={w.w} $h={w.h} $drop={w.drop ?? 0}>
              {w.el}
              {w.corner && <Corner>{w.corner}</Corner>}
            </Thumb>
          </DockItem>
        ))}
        <DockItem $gap={15}>
          <Trash />
        </DockItem>
      </DockBar>

      <WallpaperStrip>
        <Streak $x={365} $w={14} $c="#a03a2c" />
        <Streak $x={920} $w={30} $c="#26305c" />
        <Streak $x={968} $w={14} $c="#4e281c" />
        <Streak $x={1155} $w={14} $c="#573222" />
        <Streak $x={1520} $w={70} $c="#0c0a10" />
        <Streak $x={1670} $w={60} $c="#5a2a58" />
        <Streak $x={2640} $w={24} $c="#6a2a5a" />
        <ShopSign>Seattle's Best Coffee</ShopSign>
      </WallpaperStrip>
    </Desktop>
  );
}
